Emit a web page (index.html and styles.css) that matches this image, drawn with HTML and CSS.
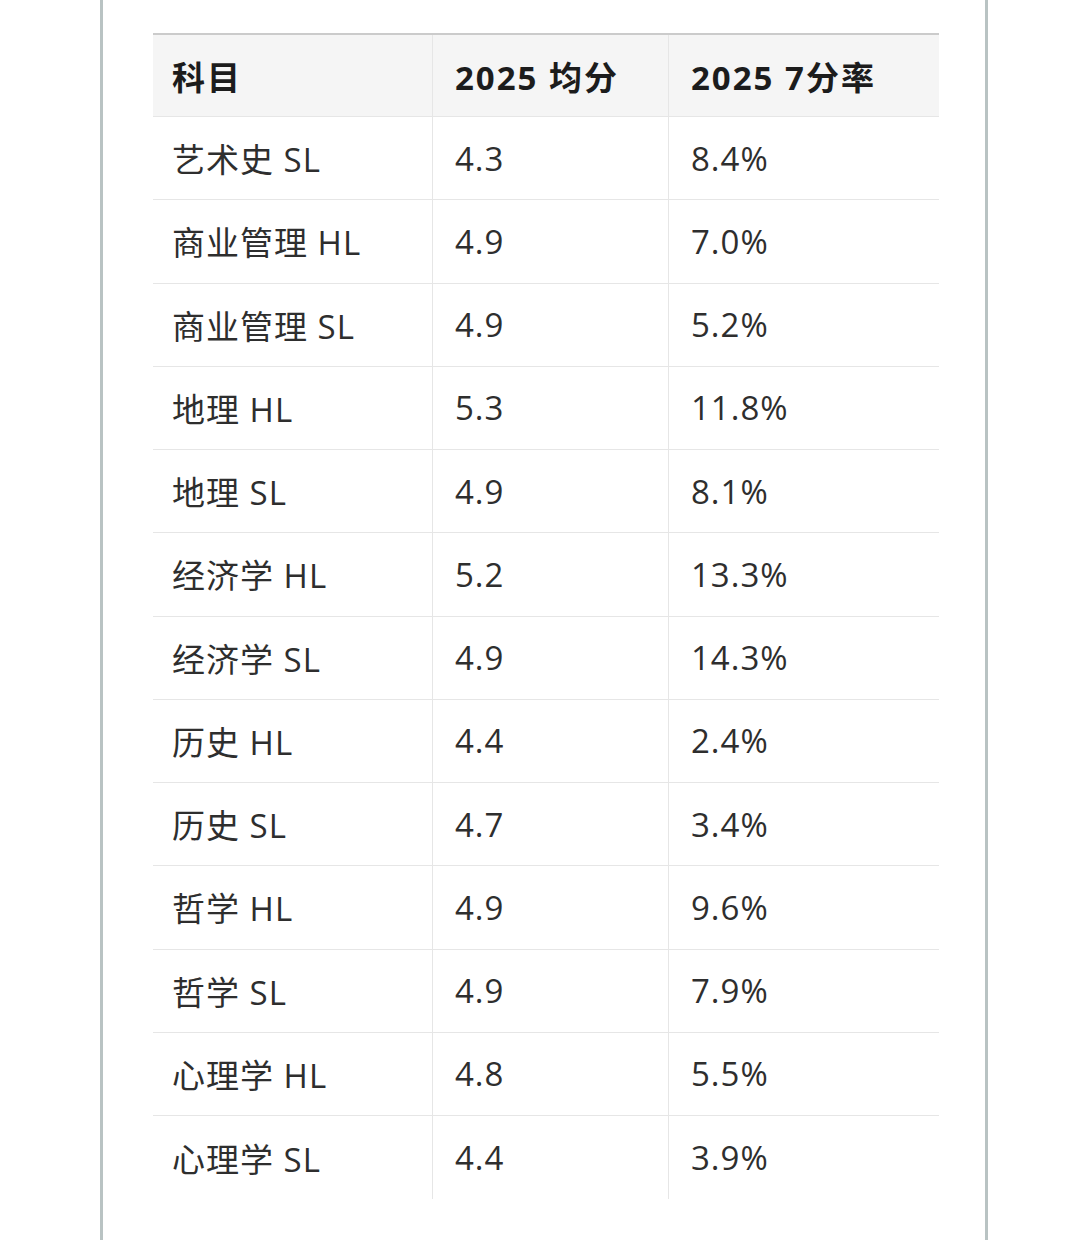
FILE: index.html
```html
<!DOCTYPE html>
<html lang="zh-CN">
<head>
<meta charset="utf-8">
<title>IB 2025 成绩</title>
<link rel="stylesheet" href="styles.css">
</head>
<body>
<div class="page">
  <table class="scores">
    <thead>
      <tr><th>科目</th><th>2025 均分</th><th>2025 7分率</th></tr>
    </thead>
    <tbody>
      <tr><td>艺术史 SL</td><td>4.3</td><td>8.4%</td></tr>
      <tr><td>商业管理 HL</td><td>4.9</td><td>7.0%</td></tr>
      <tr><td>商业管理 SL</td><td>4.9</td><td>5.2%</td></tr>
      <tr><td>地理 HL</td><td>5.3</td><td>11.8%</td></tr>
      <tr><td>地理 SL</td><td>4.9</td><td>8.1%</td></tr>
      <tr><td>经济学 HL</td><td>5.2</td><td>13.3%</td></tr>
      <tr><td>经济学 SL</td><td>4.9</td><td>14.3%</td></tr>
      <tr><td>历史 HL</td><td>4.4</td><td>2.4%</td></tr>
      <tr><td>历史 SL</td><td>4.7</td><td>3.4%</td></tr>
      <tr><td>哲学 HL</td><td>4.9</td><td>9.6%</td></tr>
      <tr><td>哲学 SL</td><td>4.9</td><td>7.9%</td></tr>
      <tr><td>心理学 HL</td><td>4.8</td><td>5.5%</td></tr>
      <tr><td>心理学 SL</td><td>4.4</td><td>3.9%</td></tr>
    </tbody>
  </table>
</div>
</body>
</html>
```
FILE: styles.css
```css
html, body {
  margin: 0;
  padding: 0;
  background: #ffffff;
}
body {
  font-family: "Open Sans", "Noto Sans CJK SC", sans-serif;
  color: #2e2e2e;
}
.page {
  box-sizing: border-box;
  margin-left: 100px;
  width: 888px;
  height: 1240px;
  border-left: 3px solid #b9c3c3;
  border-right: 3px solid #b9c3c3;
  padding-top: 33px;
  padding-left: 50px;
  overflow: hidden;
}
.scores {
  border-collapse: separate;
  border-spacing: 0;
  width: 786px;
  border-top: 2px solid #cbcbcb;
  font-size: 33px;
  letter-spacing: 1px;
}
.scores th,
.scores td {
  box-sizing: border-box;
  text-align: left;
  padding: 0 0 0 19px;
  height: 83.25px;
  border-bottom: 1px solid #e6e6e6;
  vertical-align: middle;
  white-space: nowrap;
}
.scores th {
  height: 82px;
  background: #f5f5f5;
  font-weight: 700;
  color: #1c1c1c;
  letter-spacing: 2px;
}
.scores th:nth-child(1), .scores td:nth-child(1) { width: 279px; }
.scores th:nth-child(2), .scores td:nth-child(2) { width: 236px; }
.scores th + th,
.scores td + td {
  border-left: 1px solid #e6e6e6;
  padding-left: 22px;
}
.scores tbody tr:last-child td {
  border-bottom: none;
}
```
